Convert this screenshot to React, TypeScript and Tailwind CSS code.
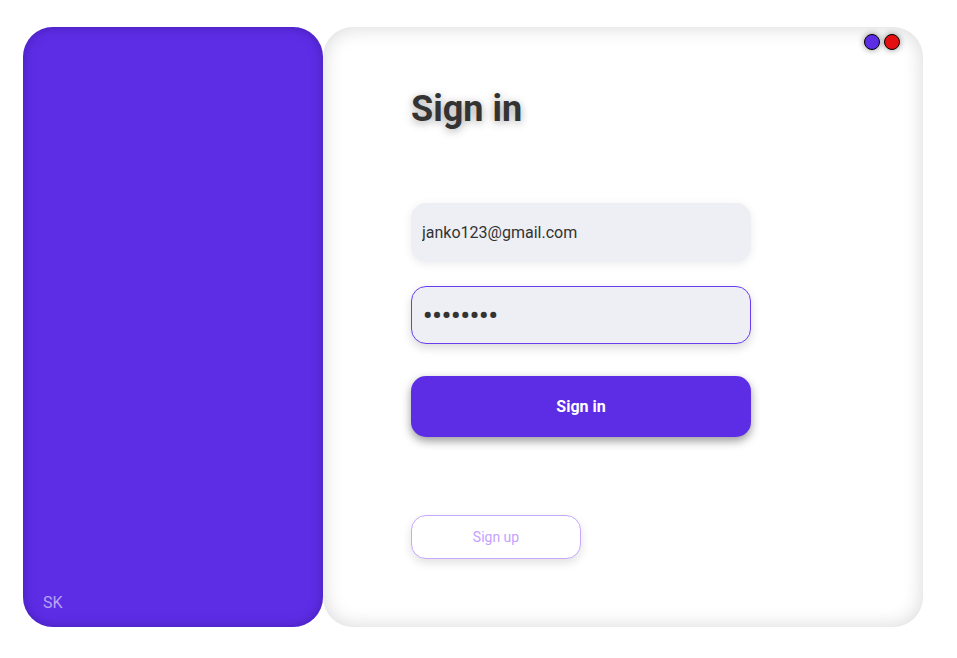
import React from "react";

const App: React.FC = () => {
  return (
    <div className="min-h-screen bg-white font-['Roboto',sans-serif]">
      <div className="flex pl-[23px] pt-[27px]">
        {/* Left panel */}
        <div className="w-[300px] h-[600px] rounded-[30px] bg-[#5d2de6] shadow-[inset_0_0_12px_rgba(40,10,120,0.45)] flex flex-col justify-end pl-5 pb-[12px]">
          <span className="text-[16px] text-[#b9a4f5]">SK</span>
        </div>

        {/* Right panel */}
        <div className="relative w-[600px] h-[600px] rounded-[30px] bg-white shadow-[inset_0_0_20px_rgba(0,0,0,0.16)] flex flex-col pl-[88px] pt-[62px]">
          <div className="absolute top-[7px] right-[23px] flex gap-[4px]">
            <span className="w-4 h-4 rounded-full bg-[#5d2de6] border border-black shadow-[0_0_6px_rgba(0,0,0,0.45)]" />
            <span className="w-4 h-4 rounded-full bg-[#e60f0f] border border-black shadow-[0_0_6px_rgba(0,0,0,0.45)]" />
          </div>

          <h1 className="h-[40px] text-[36px] leading-[40px] font-bold text-[#333] [text-shadow:0_2px_8px_rgba(0,0,0,0.35)]">
            Sign in
          </h1>

          <input
            readOnly
            value="janko123@gmail.com"
            className="mt-[74px] w-[340px] h-[59px] rounded-[15px] bg-[#eeeff4] pl-[11px] text-[16px] text-[#333] outline-none shadow-[0_2px_10px_rgba(0,0,0,0.08)]"
          />

          <input
            readOnly
            type="password"
            value="12345678"
            className="mt-[24px] w-[340px] h-[58px] rounded-[15px] bg-[#eeeff4] border border-[#6a3ef0] pl-[11px] text-[26px] font-bold text-[#333] outline-none shadow-[0_4px_10px_rgba(0,0,0,0.15)]"
          />

          <button className="mt-[32px] w-[340px] h-[61px] rounded-[15px] bg-[#5d2de6] text-white text-[16px] font-bold shadow-[0_4px_10px_rgba(0,0,0,0.4)]">
            Sign in
          </button>

          <button className="mt-[78px] w-[170px] h-[44px] rounded-[15px] bg-white border border-[#c6a9ff] text-[#c4a2ff] text-[14px] shadow-[0_4px_10px_rgba(0,0,0,0.12)]">
            Sign up
          </button>
        </div>
      </div>
    </div>
  );
};

export default App;
